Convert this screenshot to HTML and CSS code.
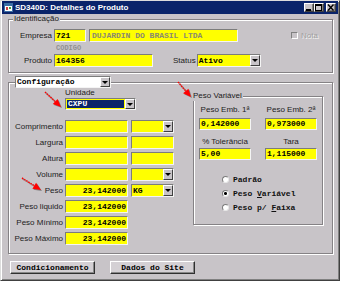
FILE: index.html
```html
<!DOCTYPE html>
<html lang="pt">
<head>
<meta charset="utf-8">
<title>SD340D</title>
<link rel="stylesheet" href="styles.css">
</head>
<body>
<div class="window">
  <div class="titlebar">
    <svg class="appicon" width="9" height="9" viewBox="0 0 9 9">
      <rect x="0.5" y="0.5" width="8" height="8" fill="#fff" stroke="#3a6ea5"/>
      <rect x="1" y="1" width="7" height="2" fill="#3a6ea5"/>
      <rect x="2" y="4" width="2" height="3" fill="#d04040"/>
      <rect x="5" y="4" width="2" height="2" fill="#40a040"/>
    </svg>
    <span class="title">SD340D: Detalhes do Produto</span>
    <div class="wbtns">
      <span class="wbtn"><svg width="8" height="7" viewBox="0 0 8 7"><rect x="1" y="5" width="5" height="2" fill="#000"/></svg></span>
      <span class="wbtn"><svg width="8" height="7" viewBox="0 0 8 7"><rect x="0.5" y="0.5" width="6" height="6" fill="none" stroke="#000"/><rect x="0" y="0" width="7" height="2" fill="#000"/></svg></span>
      <span class="wbtn close"><svg width="8" height="7" viewBox="0 0 8 7"><path d="M1 0.5 L6.5 6.5 M6.5 0.5 L1 6.5" stroke="#000" stroke-width="1.4"/></svg></span>
    </div>
  </div>

  <div class="content">
    <div class="group ident">
      <div class="gtitle">Identificação</div>
      <div class="irow first">
        <span class="lbl lw">Empresa</span>
        <span class="fld w32">721</span>
        <span class="fld w149 ro">DUJARDIN DO BRASIL LTDA</span>
        <span class="chk"><span class="cbox"></span><span>Nota</span></span>
      </div>
      <div class="caption">CODIGO</div>
      <div class="irow">
        <span class="lbl lw">Produto</span>
        <span class="fld w99">164356</span>
        <span class="lbl status">Status</span>
        <span class="fld combo w64"><span class="val">Ativo</span><span class="ddb"></span></span>
      </div>
    </div>

    <div class="group config">
      <div class="fld combo white cfgsel"><span class="val">Configuração</span><span class="ddb"></span></div>
      <div class="cfgbody">
        <div class="leftcol">
          <div class="unid">
            <div class="lbl">Unidade</div>
            <div class="fld combo w71 h12"><span class="sel">CXPU</span><span class="ddb"></span></div>
          </div>
          <div class="dims">
            <span class="lbl">Comprimento</span>
            <span class="fld f1"></span>
            <span class="fld combo f2"><span class="val"></span><span class="ddb"></span></span>

            <span class="lbl">Largura</span>
            <span class="fld f1"></span>
            <span class="fld f2"></span>

            <span class="lbl">Altura</span>
            <span class="fld f1"></span>
            <span class="fld f2"></span>

            <span class="lbl">Volume</span>
            <span class="fld f1"></span>
            <span class="fld combo f2"><span class="val"></span><span class="ddb"></span></span>

            <span class="lbl">Peso</span>
            <span class="fld f1 num">23,142000</span>
            <span class="fld combo f2"><span class="val">KG</span><span class="ddb"></span></span>

            <span class="lbl">Peso liquido</span>
            <span class="fld f1 num">23,142000</span>
            <span></span>

            <span class="lbl">Peso Mínimo</span>
            <span class="fld f1 num">23,142000</span>
            <span></span>

            <span class="lbl">Peso Máximo</span>
            <span class="fld f1 num">23,142000</span>
            <span></span>
          </div>
        </div>

        <div class="group pv">
          <div class="gtitle pvtitle">Peso Variável</div>
          <div class="pvgrid">
            <span class="plbl">Peso Emb. 1ª</span>
            <span class="plbl">Peso Emb. 2ª</span>
            <span class="fld pf">0,142000</span>
            <span class="fld pf">0,973000</span>
            <span class="plbl r3">% Tolerância</span>
            <span class="plbl r3">Tara</span>
            <span class="fld pf r4">5,00</span>
            <span class="fld pf r4">1,115000</span>
          </div>
          <div class="radios">
            <div class="radio"><span class="rc"></span><span>Padrão</span></div>
            <div class="radio"><span class="rc on"></span><span>Peso <u>V</u>ariável</span></div>
            <div class="radio"><span class="rc"></span><span>Peso p/ <u>F</u>aixa</span></div>
          </div>
        </div>
      </div>
    </div>

    <div class="buttons">
      <span class="btn">Condicionamento</span>
      <span class="btn">Dados do Site</span>
    </div>
  </div>

  <svg class="arrow a1" width="20" height="20" viewBox="0 0 20 20">
    <line x1="1" y1="2" x2="11.2" y2="11.5" stroke="#f00" stroke-width="1.5" stroke-dasharray="1.5 1"/>
    <polygon points="17,17 8.8,14.1 13.6,8.9" fill="#f00"/>
  </svg>
  <svg class="arrow a2" width="18" height="20" viewBox="0 0 18 20">
    <line x1="2" y1="2" x2="9.8" y2="11" stroke="#f00" stroke-width="1.5" stroke-dasharray="1.5 1"/>
    <polygon points="15,17 7.1,13.2 12.4,8.7" fill="#f00"/>
  </svg>
  <svg class="arrow a3" width="24" height="17" viewBox="0 0 24 17">
    <line x1="2" y1="2" x2="14.2" y2="9.7" stroke="#f00" stroke-width="1.5" stroke-dasharray="1.5 1"/>
    <polygon points="21,14 12.4,12.7 16.1,6.8" fill="#f00"/>
  </svg>
</div>
</body>
</html>
```

FILE: styles.css
```css
* { box-sizing: border-box; }
html, body { margin: 0; padding: 0; }
body {
  width: 340px;
  height: 281px;
  overflow: hidden;
  background: #c8c4c8;
  font-family: "Liberation Sans", Arial, sans-serif;
  font-size: 8px;
  color: #1c1c1c;
}

.window {
  position: relative;
  width: 340px;
  height: 281px;
  background: #c8c4c8;
  border: 1px solid;
  border-color: #dcdcdc #404040 #404040 #dcdcdc;
  box-shadow: inset 1px 1px 0 #fff, inset -1px -1px 0 #808080;
  padding: 0 1px 1px 1px;
  display: flex;
  flex-direction: column;
}

/* title bar */
.titlebar {
  height: 13px;
  background: #0a246a;
  display: flex;
  align-items: center;
  padding: 0 2px 0 2px;
  color: #fff;
  font-weight: bold;
  font-size: 8px;
}
.appicon { display: block; flex: none; }
.title { margin-left: 2px; line-height: 13px; white-space: nowrap; }
.wbtns { margin-left: auto; display: flex; }
.wbtn {
  width: 10px;
  height: 9px;
  background: #c8c4c8;
  border: 1px solid;
  border-color: #fff #404040 #404040 #fff;
  box-shadow: inset -1px -1px 0 #808080;
  display: flex;
  align-items: center;
  justify-content: center;
}
.wbtn svg { display: block; }
.wbtn.close { margin-left: 2px; }

/* content */
.content {
  padding: 0 5px 0 6px;
  display: flex;
  flex-direction: column;
}

.group {
  border: 1px solid #858285;
  box-shadow: inset 1px 1px 0 #fff, 1px 1px 0 #fff;
  display: flex;
  flex-direction: column;
}
.gtitle {
  margin: -6px 0 0 4px;
  width: max-content;
  padding: 0 1px;
  background: #c8c4c8;
  line-height: 10px;
  color: #202020;
}

.lbl { color: #1c1c1c; line-height: 10px; white-space: nowrap; }

.fld {
  display: block;
  height: 13px;
  background: #ffff00;
  border: 1px solid;
  border-color: #7c7c7c #f4f4f4 #f4f4f4 #7c7c7c;
  font-family: "Liberation Mono", "Courier New", monospace;
  font-weight: bold;
  font-size: 8px;
  line-height: 11px;
  padding: 0 1px;
  color: #000;
  white-space: nowrap;
  overflow: hidden;
}
.fld.num { text-align: right; }
.fld.ro { color: #8a8a70; padding-left: 2px; }
.fld.white { background: #fff; }
.fld.h12 { height: 12px; line-height: 10px; }

.combo { display: flex; padding: 0; }
.combo .val { flex: 1; padding-left: 1px; overflow: hidden; }
.ddb {
  flex: none;
  width: 10px;
  height: 100%;
  background: #c8c4c8;
  border: 1px solid;
  border-color: #fff #404040 #404040 #fff;
  display: flex;
  align-items: center;
  justify-content: center;
}
.ddb::after {
  content: "";
  border-left: 3px solid transparent;
  border-right: 3px solid transparent;
  border-top: 3px solid #000;
}
.sel {
  flex: 1;
  margin: 1px;
  background: #0a246a;
  color: #fff;
  padding-left: 1px;
  line-height: 8px;
}

/* identificação */
.ident { margin-top: 5px; height: 54px; }
.irow { display: flex; align-items: center; height: 13px; }
.irow.first { margin-top: 5px; }
.lw { width: 43px; text-align: right; margin-right: 2px; }
.w32 { width: 32px; }
.w149 { width: 149px; margin-left: 3px; }
.w99 { width: 99px; }
.w64 { width: 64px; }
.w71 { width: 71px; }
.status { margin-left: 20px; margin-right: 1px; }
.chk {
  display: flex;
  align-items: center;
  margin-left: 53px;
  color: #a09ea0;
  text-shadow: 1px 1px 0 #f4f4f4;
  line-height: 10px;
}
.cbox {
  width: 7px;
  height: 7px;
  margin-right: 3px;
  background: #c8c4c8;
  border: 1px solid;
  border-color: #808080 #fff #fff #808080;
}
.caption {
  height: 12px;
  line-height: 12px;
  padding-left: 47px;
  font-family: "Liberation Mono", "Courier New", monospace;
  font-weight: bold;
  font-size: 7px;
  color: #909090;
}

/* configuração */
.config { margin-top: 9px; height: 172px; }
.cfgsel { width: 96px; height: 12px; line-height: 10px; margin: -7px 0 0 6px; }
.cfgbody { display: flex; }
.leftcol { width: 165px; }
.unid { margin-left: 56px; }
.dims {
  margin-top: 10px;
  display: grid;
  grid-template-columns: 56px 66px 43px;
  grid-auto-rows: 13px;
  row-gap: 3px;
  align-items: center;
}
.dims .lbl { text-align: right; padding-right: 2px; }
.f1 { width: 63px; }
.f2 { width: 43px; }

/* peso variável */
.pv { margin: 8px 0 0 19px; width: 130px; height: 129px; }
.pvtitle { margin-left: -2px; }
.pvgrid {
  display: grid;
  grid-template-columns: 52px 52px;
  column-gap: 14px;
  padding: 4px 0 0 5px;
}
.plbl { text-align: center; line-height: 10px; white-space: nowrap; }
.pf { height: 12px; line-height: 10px; margin-top: 3px; }
.plbl.r3 { margin-top: 7px; }
.pf.r4 { margin-top: 1px; }
.radios { margin: 12px 0 0 28px; }
.radio {
  display: flex;
  align-items: center;
  height: 14px;
  font-family: "Liberation Mono", "Courier New", monospace;
  font-weight: bold;
  font-size: 8px;
  color: #101010;
  white-space: pre;
}
.rc {
  width: 7px;
  height: 7px;
  margin-right: 4px;
  border-radius: 50%;
  background: #fff;
  border: 1px solid;
  border-color: #7c7c7c #e8e8e8 #e8e8e8 #7c7c7c;
}
.rc.on { background: radial-gradient(circle, #000 0 1.3px, #fff 1.6px); }

/* buttons */
.buttons { margin-top: 7px; padding-left: 2px; display: flex; gap: 15px; }
.btn {
  width: 85px;
  height: 13px;
  background: #d4d0d4;
  border: 1px solid;
  border-color: #fff #303030 #303030 #fff;
  box-shadow: inset -1px -1px 0 #888;
  font-family: "Liberation Mono", "Courier New", monospace;
  font-weight: bold;
  font-size: 8px;
  line-height: 11px;
  text-align: center;
  color: #000;
}

/* annotation arrows */
.arrow { position: absolute; filter: drop-shadow(1px 1px 0.6px rgba(0,0,0,0.35)); }
.a1 { left: 43px; top: 89px; }
.a2 { left: 175px; top: 79px; }
.a3 { left: 19px; top: 175px; }
```
